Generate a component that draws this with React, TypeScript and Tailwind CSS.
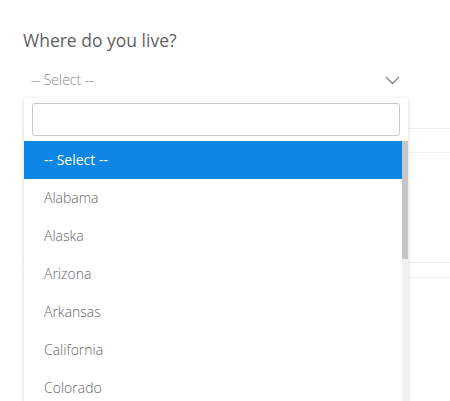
const options = [
  '-- Select --',
  'Alabama',
  'Alaska',
  'Arizona',
  'Arkansas',
  'California',
  'Colorado',
];

export default function App() {
  return (
    <div
      className="relative h-[401px] w-[450px] overflow-hidden bg-white"
      style={{ fontFamily: '"Open Sans", "Noto Sans", sans-serif' }}
    >
      <div className="px-[23px] pt-[28px]">
        <h2 className="text-[17.5px] leading-[24px] text-[#5f5f5f]">Where do you live?</h2>
        <div className="mt-[16px] flex h-[22px] items-center justify-between pl-[8px] pr-[27px]">
          <span className="text-[14px] font-light text-[#8a8a8a]">-- Select --</span>
          <svg width="15" height="9" viewBox="0 0 15 9" fill="none" className="mt-[2px]">
            <path d="M1 1l6.5 6.5L14 1" stroke="#8a8a8a" strokeWidth="1.4" />
          </svg>
        </div>
      </div>

      {/* fields behind the open menu */}
      <div className="mt-[38px] ml-[23px] border-t border-[#f0f0f0]" />
      <div className="mt-[23px] ml-[23px] border-t border-[#f3f3f3]" />
      <div className="mt-[109px] ml-[23px] border-t border-[#ececec]" />
      <div className="mt-[14px] ml-[23px] border-t border-[#f5f5f5]" />

      <div className="absolute left-[24px] top-[98px] w-[384px] bg-white shadow-[0_1px_4px_rgba(0,0,0,0.18)]">
        <div className="px-[8px] pt-[5px] pb-[5px]">
          <input
            type="text"
            className="block h-[33px] w-full rounded-[3px] border border-[#c8c8c8] bg-white px-2 text-sm outline-none"
          />
        </div>
        <div className="flex">
          <ul className="flex-1">
            {options.map((opt, i) => (
              <li
                key={opt}
                className={
                  i === 0
                    ? 'flex h-[38px] items-center bg-[#0d86e6] pb-[2px] pl-[20px] text-[14px] text-white'
                    : 'flex h-[38px] items-center pb-[2px] pl-[20px] text-[14px] font-light text-[#666]'
                }
              >
                {opt}
              </li>
            ))}
          </ul>
          <div className="w-[6px] bg-[#f1f1f1]">
            <div className="h-[118px] bg-[#c6c6c6]" />
          </div>
        </div>
      </div>
    </div>
  );
}
